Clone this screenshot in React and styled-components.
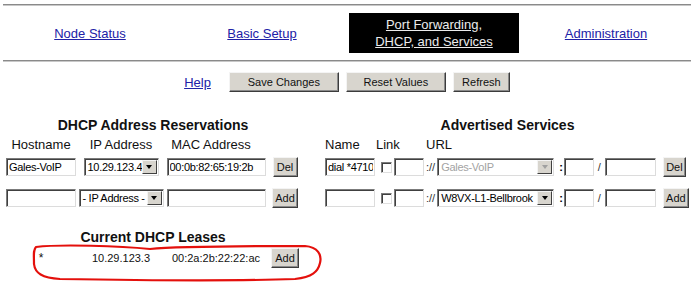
import React from "react";
import styled, { createGlobalStyle } from "styled-components";

const Global = createGlobalStyle`
  html, body { margin: 0; padding: 0; background: #fff; }
  body { font-family: "Liberation Sans", Arial, sans-serif; color: #000; }
`;

const Page = styled.div`
  width: 688px;
  min-height: 287px;
  padding: 4px 9px 0 3px;
`;

const Rule = styled.div`
  height: 0;
  border-top: 1px solid #8a8a8a;
  border-bottom: 1px solid #c8c8c8;
`;

const Nav = styled.nav`
  display: grid;
  grid-template-columns: repeat(4, 172px);
  padding: 7px 0;
  margin-left: 1px;
`;

const NavCell = styled.div`
  height: 40px;
  margin: 0 1px;
  display: flex;
  align-items: center;
  justify-content: center;
  background: ${(p) => (p.$active ? "#000" : "transparent")};
`;

const NavLink = styled.a`
  font-size: 13px;
  line-height: 17px;
  text-align: center;
  color: ${(p) => (p.$active ? "#ececec" : "#2121a6")};
  text-decoration: underline;
`;

const Toolbar = styled.div`
  display: flex;
  justify-content: center;
  align-items: center;
  gap: 7px;
  height: 20px;
  margin-top: 10px;
`;

const HelpLink = styled(NavLink)`
  margin-right: 11px;
`;

const Button = styled.button`
  box-sizing: border-box;
  width: ${(p) => p.$w}px;
  height: 20px;
  margin-left: ${(p) => p.$ml || 0}px;
  padding: 0;
  font-family: inherit;
  font-size: 11px;
  color: #111;
  background: #d8d5ce;
  border: 1px solid;
  border-color: #f4f4f4 #3c3c3c #3c3c3c #f4f4f4;
  box-shadow: inset -1px -1px 0 #8a8a8a;
  flex-shrink: 0;
`;

const Sections = styled.div`
  display: flex;
  align-items: flex-start;
  margin-top: 24px;
  margin-left: 1px;
`;

const LeftPanel = styled.div`
  width: 298px;
  display: flex;
  flex-direction: column;
`;

const RightPanel = styled.div`
  width: 365px;
  margin-left: 23px;
  display: flex;
  flex-direction: column;
`;

const Title = styled.div`
  font-size: 14px;
  font-weight: bold;
  line-height: 18px;
  text-align: center;
  color: #111;
`;

const TableRow = styled.div`
  display: grid;
  grid-template-columns: 74px 86px 104px 34px;
  align-items: center;
  justify-items: center;
  height: ${(p) => p.$h || 20}px;
  margin-top: ${(p) => p.$mt || 0}px;
`;

const FlexRow = styled.div`
  display: flex;
  align-items: center;
  height: ${(p) => p.$h || 20}px;
  margin-top: ${(p) => p.$mt || 0}px;
`;

const ColHead = styled.div`
  font-size: 13px;
  line-height: 16px;
  color: #111;
  white-space: nowrap;
  width: ${(p) => (p.$w ? `${p.$w}px` : "auto")};
  margin-right: ${(p) => p.$shift || 0}px;
`;

const TextBox = styled.input`
  box-sizing: border-box;
  width: ${(p) => p.$w}px;
  height: 18px;
  margin: 0 0 0 ${(p) => p.$ml || 0}px;
  padding: 0 1px 0 2px;
  border: 1px solid;
  border-color: #7b7b7b #dcdcdc #dcdcdc #7b7b7b;
  box-shadow: inset 1px 1px 0 #404040;
  background: #fff;
  font-family: inherit;
  font-size: 11px;
  letter-spacing: -0.3px;
  color: #000;
  outline: none;
  flex-shrink: 0;
`;

const SelectBox = styled.div`
  box-sizing: border-box;
  width: ${(p) => p.$w}px;
  height: 18px;
  margin-left: ${(p) => p.$ml || 0}px;
  padding: 1px;
  display: flex;
  align-items: center;
  border: 1px solid;
  border-color: #7b7b7b #dcdcdc #dcdcdc #7b7b7b;
  box-shadow: inset 1px 1px 0 #404040;
  background: #fff;
  flex-shrink: 0;
`;

const SelectText = styled.span`
  flex: 1;
  min-width: 0;
  overflow: hidden;
  white-space: nowrap;
  padding-left: 2px;
  font-size: 11px;
  letter-spacing: -0.3px;
  color: ${(p) => (p.$disabled ? "#a3a3a3" : "#000")};
`;

const SelectArrow = styled.span`
  box-sizing: border-box;
  width: 15px;
  height: 14px;
  display: flex;
  align-items: center;
  justify-content: center;
  background: #d8d5ce;
  border: 1px solid;
  border-color: #f4f4f4 #404040 #404040 #f4f4f4;
  &::after {
    content: "";
    border-left: 3.5px solid transparent;
    border-right: 3.5px solid transparent;
    border-top: 4px solid ${(p) => (p.$disabled ? "#a0a0a0" : "#000")};
  }
`;

const CheckBox = styled.span`
  box-sizing: border-box;
  width: 11px;
  height: 11px;
  margin-left: ${(p) => p.$ml || 0}px;
  border: 1px solid;
  border-color: #7b7b7b #e0e0e0 #e0e0e0 #7b7b7b;
  box-shadow: inset 1px 1px 0 #404040;
  background: #fff;
  flex-shrink: 0;
`;

const Sep = styled.span`
  margin-left: ${(p) => p.$ml || 0}px;
  font-size: 11px;
  font-weight: ${(p) => (p.$bold ? "bold" : "normal")};
  color: ${(p) => (p.$bold ? "#000" : "#333")};
  white-space: nowrap;
`;

const Cell = styled.span`
  font-size: ${(p) => p.$size || 11}px;
  color: #111;
  white-space: nowrap;
`;

const LeaseBlock = styled.div`
  position: relative;
  margin-top: 20px;
  padding-bottom: 16px;
`;

const Annotation = styled.svg`
  position: absolute;
  left: 0;
  top: 0;
  width: 320px;
  height: 63px;
  overflow: visible;
  pointer-events: none;
`;

function Select({ w, ml, value, disabled }) {
  return (
    <SelectBox $w={w} $ml={ml}>
      <SelectText $disabled={disabled}>{value}</SelectText>
      <SelectArrow $disabled={disabled} />
    </SelectBox>
  );
}

function ServiceRow({ mt, name, value, disabled, action }) {
  return (
    <FlexRow $mt={mt}>
      <TextBox $w={50} defaultValue={name} readOnly />
      <CheckBox $ml={6} />
      <TextBox $w={30} $ml={2} readOnly />
      <Sep $ml={2}>://</Sep>
      <Select w={117} ml={2} value={value} disabled={disabled} />
      <Sep $ml={5} $bold>:</Sep>
      <TextBox $w={30} $ml={1} readOnly />
      <Sep $ml={4}>/</Sep>
      <TextBox $w={51} $ml={4} readOnly />
      <Button type="button" $ml={7} $w={action === "Add" ? 26 : 23}>
        {action}
      </Button>
    </FlexRow>
  );
}

export default function App() {
  return (
    <>
      <Global />
      <Page>
        <Rule />
        <Nav>
          <NavCell>
            <NavLink href="#">Node Status</NavLink>
          </NavCell>
          <NavCell>
            <NavLink href="#">Basic Setup</NavLink>
          </NavCell>
          <NavCell $active>
            <NavLink href="#" $active>
              Port Forwarding,
              <br />
              DHCP, and Services
            </NavLink>
          </NavCell>
          <NavCell>
            <NavLink href="#">Administration</NavLink>
          </NavCell>
        </Nav>
        <Rule />

        <Toolbar>
          <HelpLink href="#">Help</HelpLink>
          <Button type="button" $w={110}>Save Changes</Button>
          <Button type="button" $w={100}>Reset Values</Button>
          <Button type="button" $w={57}>Refresh</Button>
        </Toolbar>

        <Sections>
          <LeftPanel>
            <Title>DHCP Address Reservations</Title>
            <TableRow $h={16} $mt={3}>
              <ColHead>Hostname</ColHead>
              <ColHead>IP Address</ColHead>
              <ColHead $shift={10}>MAC Address</ColHead>
              <span />
            </TableRow>
            <TableRow $mt={4}>
              <TextBox $w={70} defaultValue="Gales-VoIP" readOnly />
              <Select w={75} value="10.29.123.4" />
              <TextBox $w={99} defaultValue="00:0b:82:65:19:2b" readOnly />
              <Button type="button" $w={25}>Del</Button>
            </TableRow>
            <TableRow $mt={11}>
              <TextBox $w={70} readOnly />
              <Select w={85} value="- IP Address -" />
              <TextBox $w={99} readOnly />
              <Button type="button" $w={26}>Add</Button>
            </TableRow>

            <LeaseBlock>
              <Title>Current DHCP Leases</Title>
              <TableRow $mt={2}>
                <Cell $size={12}>*</Cell>
                <Cell>10.29.123.3</Cell>
                <Cell>00:2a:2b:22:22:ac</Cell>
                <Button type="button" $w={28}>Add</Button>
              </TableRow>
              <Annotation viewBox="4 228 320 63">
                <path
                  d="M36 247 C60 244 120 246 150 249 C180 246 260 246 305 246 C318 247 322 255 320 263 C318 272 312 277 295 279 C240 281 120 280 60 279 C42 278 35 273 34 264 C34 255 33 250 36 247 Z"
                  fill="none"
                  stroke="#e4100c"
                  strokeWidth="2.2"
                  strokeLinejoin="round"
                />
              </Annotation>
            </LeaseBlock>
          </LeftPanel>

          <RightPanel>
            <Title>Advertised Services</Title>
            <FlexRow $h={16} $mt={3}>
              <ColHead $w={51}>Name</ColHead>
              <ColHead $w={50}>Link</ColHead>
              <ColHead>URL</ColHead>
            </FlexRow>
            <ServiceRow mt={4} name="dial *4710" value="Gales-VoIP" disabled action="Del" />
            <ServiceRow mt={11} name="" value="W8VX-L1-Bellbrook" action="Add" />
          </RightPanel>
        </Sections>
      </Page>
    </>
  );
}
